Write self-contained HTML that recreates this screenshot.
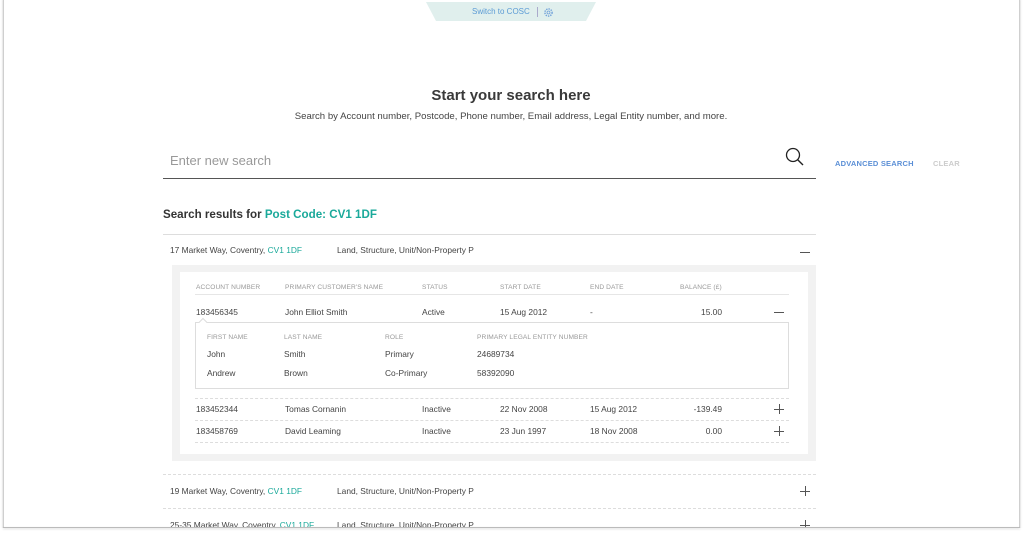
<!DOCTYPE html>
<html><head><meta charset="utf-8"><style>
*{margin:0;padding:0;box-sizing:border-box}
body{width:1024px;height:533px;background:#fff;font-family:"Liberation Sans",sans-serif;color:#444;position:relative;overflow:hidden}
.frame{position:absolute;left:3px;top:-2px;width:1017px;height:530px;border:1px solid #cfcfcf;box-shadow:0 1px 2px rgba(0,0,0,.25);overflow:hidden;background:#fff}
.a{position:absolute;white-space:nowrap}
.t{font-size:8.4px;color:#444}
.h{font-size:6.6px;color:#999;letter-spacing:.1px}
.teal{color:#1aa99a}
.dash{position:absolute;height:0;border-top:1px dashed #ddd}
.plus,.minus{position:absolute;width:10px;height:10px}
.plus:before,.minus:before{content:"";position:absolute;left:0;top:5px;width:10px;height:1px;background:#555}
.plus:after{content:"";position:absolute;left:5px;top:0;width:1px;height:10px;background:#555}
</style></head><body>
<div class="frame"></div>
<svg class="a" style="left:426px;top:0" width="172" height="22"><polygon points="0,2 170,2 160,21 10,21" fill="#e0efed"/></svg>
<div class="a" style="left:472px;top:7px;font-size:8px;color:#5b9bd5">Switch to COSC</div>
<div class="a" style="left:537px;top:7px;width:1px;height:10px;background:#aac"></div>
<svg class="a" style="left:543px;top:7px" width="11" height="11" viewBox="0 0 11 11"><circle cx="5.5" cy="5.5" r="3.6" fill="none" stroke="#6fa0d8" stroke-width="1.4" stroke-dasharray="1.4 1"/><circle cx="5.5" cy="5.5" r="1.5" fill="none" stroke="#6fa0d8" stroke-width=".8"/></svg>

<div class="a" style="left:0;width:1022px;text-align:center;top:87px;font-size:15px;font-weight:bold;color:#3a3a3a">Start your search here</div>
<div class="a" style="left:0;width:1022px;text-align:center;top:111px;font-size:9.6px;color:#444">Search by Account number, Postcode, Phone number, Email address, Legal Entity number, and more.</div>

<div class="a" style="left:170px;top:153px;font-size:13px;color:#999">Enter new search</div>
<div class="a" style="left:163px;top:178px;width:653px;height:1px;background:#555"></div>
<svg class="a" style="left:785px;top:147px" width="20" height="20"><circle cx="8" cy="8" r="6.5" fill="none" stroke="#222" stroke-width="1.3"/><line x1="12.7" y1="12.7" x2="18" y2="18" stroke="#222" stroke-width="1.4"/></svg>
<div class="a" style="left:835px;top:159px;font-size:7.5px;color:#5b8fd6;font-weight:bold;letter-spacing:.2px">ADVANCED SEARCH</div>
<div class="a" style="left:933px;top:159px;font-size:7.5px;color:#ccc;font-weight:bold;letter-spacing:.2px">CLEAR</div>

<div class="a" style="left:163px;top:208px;font-size:11.6px;font-weight:bold;color:#333">Search results for <span class="teal">Post Code: CV1 1DF</span></div>
<div class="a" style="left:163px;top:234px;width:653px;height:1px;background:#ddd"></div>

<div class="a t" style="left:170px;top:245px">17 Market Way, Coventry, <span class="teal">CV1 1DF</span></div>
<div class="a t" style="left:337px;top:245px">Land, Structure, Unit/Non-Property P</div>
<div class="minus" style="left:800px;top:247px"></div>

<div class="a" style="left:172px;top:265px;width:644px;height:196px;background:#f2f2f2"></div>
<div class="a" style="left:180px;top:272px;width:628px;height:182px;background:#fff"></div>

<div class="a h" style="left:196px;top:284px">ACCOUNT NUMBER</div>
<div class="a h" style="left:285px;top:284px">PRIMARY CUSTOMER'S NAME</div>
<div class="a h" style="left:422px;top:284px">STATUS</div>
<div class="a h" style="left:500px;top:284px">START DATE</div>
<div class="a h" style="left:590px;top:284px">END DATE</div>
<div class="a h" style="left:680px;top:284px">BALANCE (£)</div>
<div class="a" style="left:195px;top:294px;width:594px;height:1px;background:#e6e6e6"></div>

<div class="a t" style="left:196px;top:307px">183456345</div>
<div class="a t" style="left:285px;top:307px">John Elliot Smith</div>
<div class="a t" style="left:422px;top:307px">Active</div>
<div class="a t" style="left:500px;top:307px">15 Aug 2012</div>
<div class="a t" style="left:590px;top:307px">-</div>
<div class="a t" style="left:662px;width:60px;text-align:right;top:307px">15.00</div>
<div class="minus" style="left:774px;top:307px"></div>

<div class="a" style="left:195px;top:322px;width:594px;height:67px;border:1px solid #ddd"></div>
<div class="a" style="left:200px;top:319px;width:6px;height:6px;background:#fff;border-left:1px solid #ddd;border-top:1px solid #ddd;transform:rotate(45deg)"></div>
<div class="a h" style="left:207px;top:334px">FIRST NAME</div>
<div class="a h" style="left:284px;top:334px">LAST NAME</div>
<div class="a h" style="left:385px;top:334px">ROLE</div>
<div class="a h" style="left:477px;top:334px">PRIMARY LEGAL ENTITY NUMBER</div>
<div class="a t" style="left:207px;top:349px">John</div>
<div class="a t" style="left:284px;top:349px">Smith</div>
<div class="a t" style="left:385px;top:349px">Primary</div>
<div class="a t" style="left:477px;top:349px">24689734</div>
<div class="a t" style="left:207px;top:368px">Andrew</div>
<div class="a t" style="left:284px;top:368px">Brown</div>
<div class="a t" style="left:385px;top:368px">Co-Primary</div>
<div class="a t" style="left:477px;top:368px">58392090</div>

<div class="dash" style="left:195px;top:398px;width:594px"></div>
<div class="a t" style="left:196px;top:404px">183452344</div>
<div class="a t" style="left:285px;top:404px">Tomas Cornanin</div>
<div class="a t" style="left:422px;top:404px">Inactive</div>
<div class="a t" style="left:500px;top:404px">22 Nov 2008</div>
<div class="a t" style="left:590px;top:404px">15 Aug 2012</div>
<div class="a t" style="left:662px;width:60px;text-align:right;top:404px">-139.49</div>
<div class="plus" style="left:774px;top:404px"></div>
<div class="dash" style="left:195px;top:420px;width:594px"></div>
<div class="a t" style="left:196px;top:426px">183458769</div>
<div class="a t" style="left:285px;top:426px">David Leaming</div>
<div class="a t" style="left:422px;top:426px">Inactive</div>
<div class="a t" style="left:500px;top:426px">23 Jun 1997</div>
<div class="a t" style="left:590px;top:426px">18 Nov 2008</div>
<div class="a t" style="left:662px;width:60px;text-align:right;top:426px">0.00</div>
<div class="plus" style="left:774px;top:426px"></div>
<div class="dash" style="left:195px;top:442px;width:594px"></div>

<div class="dash" style="left:163px;top:474px;width:653px"></div>
<div class="a t" style="left:170px;top:486px">19 Market Way, Coventry, <span class="teal">CV1 1DF</span></div>
<div class="a t" style="left:337px;top:486px">Land, Structure, Unit/Non-Property P</div>
<div class="plus" style="left:800px;top:486px"></div>
<div class="dash" style="left:163px;top:508px;width:653px"></div>
<div class="a t" style="left:170px;top:520px">25-35 Market Way, Coventry, <span class="teal">CV1 1DF</span></div>
<div class="a t" style="left:337px;top:520px">Land, Structure, Unit/Non-Property P</div>
<div class="plus" style="left:800px;top:520px"></div>
<div class="a" style="left:0;top:528px;width:1024px;height:5px;background:#fff"></div>
<div class="a" style="left:3px;top:527px;width:1017px;height:1px;background:#bbb;box-shadow:0 1px 2px rgba(0,0,0,.2)"></div>
</body></html>
